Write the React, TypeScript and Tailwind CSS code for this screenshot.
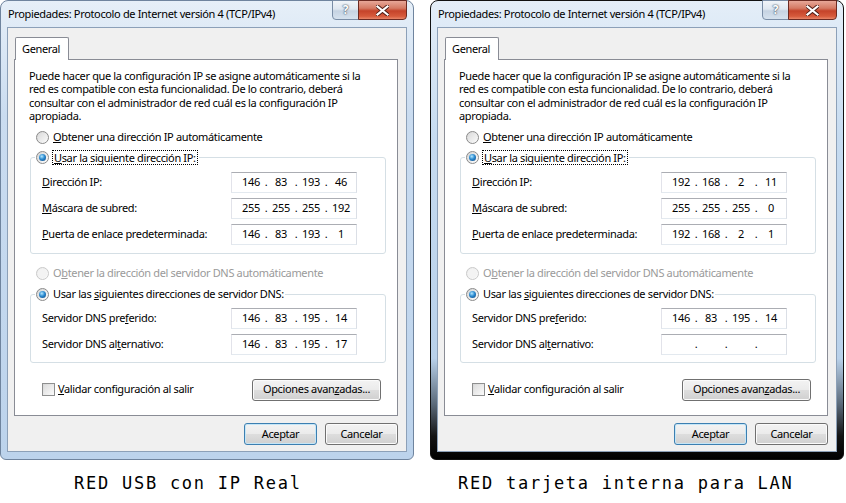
import React, { Fragment } from "react";

const UI = "font-['Noto_Sans',sans-serif] text-[11px] tracking-[-0.35px] text-black";

function Radio({ checked, disabled }: { checked?: boolean; disabled?: boolean }) {
  return (
    <span
      className={`flex h-[13px] w-[13px] shrink-0 items-center justify-center rounded-full border ${
        disabled
          ? "border-[#c9c9c9] bg-[linear-gradient(135deg,#ececec,#fbfbfb)]"
          : "border-[#8a8a8a] bg-[linear-gradient(135deg,#d4d4d4,#ffffff)]"
      }`}
    >
      {checked ? (
        <span className="h-[7px] w-[7px] rounded-full bg-[radial-gradient(circle_at_40%_35%,#b5e8ff_0%,#2a8ad0_45%,#0d3f78_100%)]" />
      ) : (
        <span
          className={`h-[9px] w-[9px] rounded-full ${
            disabled ? "bg-[#f3f3f3]" : "bg-[linear-gradient(135deg,#dcdcdc,#f7f7f7)]"
          }`}
        />
      )}
    </span>
  );
}

function IpBox({ v }: { v: string[] }) {
  return (
    <div className="flex h-[21px] w-[126px] items-center border border-[#abadb3] border-b-[#e3e9ef] border-l-[#e2e3ea] border-r-[#dbdfe6] bg-white pl-[7px]">
      {v.map((o, i) => (
        <Fragment key={i}>
          {i > 0 && <span className="w-[6px] text-center">.</span>}
          <span className="w-[24px] text-center">{o}</span>
        </Fragment>
      ))}
    </div>
  );
}

function Row({ label, v }: { label: React.ReactNode; v: string[] }) {
  return (
    <div className="flex h-[26px] items-center justify-between pl-[7px] pr-[28px]">
      <span>{label}</span>
      <IpBox v={v} />
    </div>
  );
}

function Btn({ children, def, w }: { children: React.ReactNode; def?: boolean; w: string }) {
  return (
    <div
      className={`flex h-[22px] ${w} items-center justify-center rounded-[3px] border ${
        def
          ? "border-[#3c7fb1] shadow-[inset_0_0_0_1px_#c5e6f7]"
          : "border-[#707070] shadow-[inset_0_0_0_1px_#fbfbfb]"
      } bg-[linear-gradient(180deg,#f3f3f3_0%,#ebebeb_48%,#dddddd_52%,#d0d0d0_100%)]`}
    >
      {children}
    </div>
  );
}

type Data = { ip: string[]; mask: string[]; gw: string[]; d1: string[]; d2: string[] };

function Win({ dark, d }: { dark?: boolean; d: Data }) {
  return (
    <div
      className={`flex h-[460px] w-[414px] flex-col rounded-t-[8px] rounded-b-[6px] border px-[6px] pb-[7px] ${
        dark
          ? "border-[#111111] bg-[linear-gradient(180deg,#e4eef8_0%,#c6dbf0_30%,#b9d1ea_78%,#5b6a7a_88%,#141414_95%,#000000_100%)]"
          : "border-[#6f849e] bg-[linear-gradient(180deg,#e6eff8_0%,#cadcf0_25%,#bcd3ec_100%)]"
      }`}
    >
      <div className="flex h-[26px] items-start">
        <div className="ml-[1px] pt-[5px] text-[11px]">Propiedades: Protocolo de Internet versión 4 (TCP/IPv4)</div>
        <div className="-mt-px ml-auto flex">
          <div className="flex h-[20px] w-[27px] items-center justify-center rounded-bl-[4px] border border-[#7a8da6] bg-[linear-gradient(180deg,#f1f5f9_0%,#dfe7f0_45%,#c6d3e2_55%,#d6e2ee_100%)] font-bold text-[12px] text-white [text-shadow:0_0_2px_#3b4a5c,0_0_1px_#3b4a5c]">
            ?
          </div>
          <div className="-ml-px flex h-[20px] w-[49px] items-center justify-center rounded-br-[4px] border border-[#6b2a22] bg-[linear-gradient(180deg,#e7a798_0%,#d47a64_40%,#c5432a_55%,#d65a3c_85%,#e9876a_100%)]">
            <svg width="13" height="11" viewBox="0 0 13 11">
              <path
                d="M1.5 1.5 L11.5 9.5 M11.5 1.5 L1.5 9.5"
                stroke="#4a1a14"
                strokeWidth="4"
                strokeLinecap="square"
              />
              <path
                d="M1.5 1.5 L11.5 9.5 M11.5 1.5 L1.5 9.5"
                stroke="#ffffff"
                strokeWidth="2.2"
                strokeLinecap="square"
              />
            </svg>
          </div>
        </div>
      </div>
      <div className="flex flex-1 flex-col border border-[#8ca0b8] bg-[#f0f0f0] pl-[6px] pr-[8px] pt-[9px]">
        <div className="relative z-10 -mb-px ml-[1px] flex h-[23px] w-[54px] items-start rounded-t-[2px] border border-b-0 border-[#898c95] bg-white pl-[6px] pt-[3px]">
          General
        </div>
        <div className="flex h-[357px] flex-col border border-[#898c95] bg-white pl-[15px] pr-[12px] pt-[9px]">
          <p className="-ml-px leading-[13.4px]">
            Puede hacer que la configuración IP se asigne automáticamente si la
            <br />
            red es compatible con esta funcionalidad. De lo contrario, deberá
            <br />
            consultar con el administrador de red cuál es la configuración IP
            <br />
            apropiada.
          </p>
          <div className="ml-[6px] mt-[7px] flex h-[16px] items-center gap-[4px]">
            <Radio />
            <span>
              <u>O</u>btener una dirección IP automáticamente
            </span>
          </div>
          <fieldset className="mt-[4px] w-[356px] rounded-[3px] border border-[#d5dfe5] pb-[5px] pl-[4px]">
            <legend className="flex h-[16px] items-center gap-[3px] px-[1px]">
              <Radio checked />
              <span className="border border-dotted border-black px-px leading-[13px]">
                <u>U</u>sar la siguiente dirección IP:
              </span>
            </legend>
            <div className="pt-[4px]">
              <Row label={<><u>D</u>irección IP:</>} v={d.ip} />
              <Row label={<><u>M</u>áscara de subred:</>} v={d.mask} />
              <Row label={<><u>P</u>uerta de enlace predeterminada:</>} v={d.gw} />
            </div>
          </fieldset>
          <div className="ml-[6px] mt-[12px] flex h-[16px] items-center gap-[4px] text-[#9a9a9a]">
            <Radio disabled />
            <span>
              O<u>b</u>tener la dirección del servidor DNS automáticamente
            </span>
          </div>
          <fieldset className="mt-[5px] w-[356px] rounded-[3px] border border-[#d5dfe5] pb-[4px] pl-[4px]">
            <legend className="flex h-[16px] items-center gap-[4px] px-[1px]">
              <Radio checked />
              <span>
                Usar las <u>s</u>iguientes direcciones de servidor DNS:
              </span>
            </legend>
            <div className="pt-[3px]">
              <Row label={<>Servidor DNS pre<u>f</u>erido:</>} v={d.d1} />
              <Row label={<>Servidor DNS al<u>t</u>ernativo:</>} v={d.d2} />
            </div>
          </fieldset>
          <div className="mt-[16px] flex w-[356px] items-center justify-between pl-[12px] pr-[5px]">
            <div className="flex items-center gap-[3px]">
              <span className="flex h-[13px] w-[13px] items-center justify-center border border-[#8e8f8f] bg-[linear-gradient(135deg,#d6d6d6,#fbfbfb)]">
                <span className="h-[9px] w-[9px] bg-[linear-gradient(135deg,#dedede,#f8f8f8)]" />
              </span>
              <span>
                <u>V</u>alidar configuración al salir
              </span>
            </div>
            <Btn w="w-[129px]">
              <span>
                Opciones avan<u>z</u>adas...
              </span>
            </Btn>
          </div>
        </div>
        <div className="mt-[7px] flex justify-end gap-[8px]">
          <Btn def w="w-[73px]">
            Aceptar
          </Btn>
          <Btn w="w-[73px]">Cancelar</Btn>
        </div>
      </div>
    </div>
  );
}

export default function App() {
  const a: Data = {
    ip: ["146", "83", "193", "46"],
    mask: ["255", "255", "255", "192"],
    gw: ["146", "83", "193", "1"],
    d1: ["146", "83", "195", "14"],
    d2: ["146", "83", "195", "17"],
  };
  const b: Data = {
    ip: ["192", "168", "2", "11"],
    mask: ["255", "255", "255", "0"],
    gw: ["192", "168", "2", "1"],
    d1: ["146", "83", "195", "14"],
    d2: ["", "", "", ""],
  };
  return (
    <div className={`flex h-[503px] w-[846px] gap-[16px] overflow-hidden bg-white ${UI}`}>
      <div className="flex w-[414px] flex-col">
        <Win d={a} />
        <div className="mt-[11px] pl-[74px] font-['DejaVu_Sans_Mono',monospace] text-[17px] leading-[24px] tracking-[1.75px]">
          RED USB con IP Real
        </div>
      </div>
      <div className="flex w-[416px] flex-col">
        <Win dark d={b} />
        <div className="mt-[11px] pl-[28px] font-['DejaVu_Sans_Mono',monospace] text-[17px] leading-[24px] tracking-[1.75px]">
          RED tarjeta interna para LAN
        </div>
      </div>
    </div>
  );
}
